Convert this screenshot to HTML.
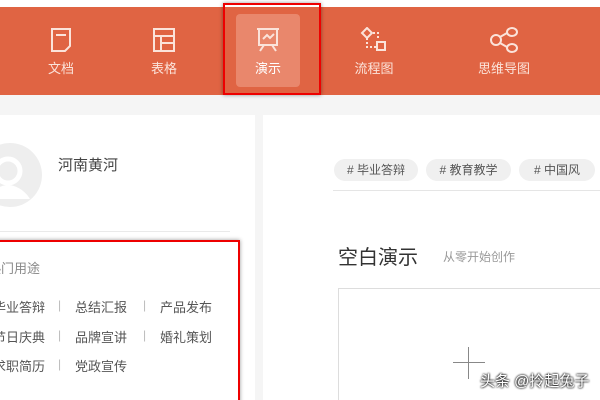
<html><head><style>
html,body{margin:0;width:600px;height:400px;overflow:hidden}
body{background:#f5f5f5;font-family:"Liberation Sans","Noto Sans CJK SC",sans-serif;position:relative}
.a{position:absolute}
.bar{left:0;top:7px;width:600px;height:88px;background:#e06443}
.nav{color:#fbe3da;font-size:13px;text-align:center;width:80px}
.nav svg{display:block;margin:0 auto 5px}
.it{font-size:13px;color:#555;white-space:nowrap}
.sp{font-size:12px;color:#bbb}
.tag{height:22px;border-radius:11px;background:#f0f0f0;color:#555;font-size:12px;line-height:22px;text-align:center}
</style></head><body>
<div class="a" style="left:0;top:0;width:600px;height:7px;background:#fff"></div>
<div class="a bar"></div>
<div class="a" style="left:236px;top:14px;width:64px;height:73px;background:#e9876c;border-radius:4px"></div>
<div class="a nav" style="left:21px;top:27px"><svg width="24" height="26" viewBox="0 0 24 26" fill="none" stroke="#fbe3da" stroke-width="2"><path d="M3 2h18v17l-5 5H3z"/><path d="M7 8h10"/></svg>文档</div>
<div class="a nav" style="left:124px;top:27px"><svg width="24" height="26" viewBox="0 0 24 26" fill="none" stroke="#fbe3da" stroke-width="2"><rect x="2" y="2" width="20" height="22"/><path d="M2 9h20M9 9v15M9 16h13"/></svg>表格</div>
<div class="a nav" style="left:228px;top:27px;color:#fff"><svg width="24" height="26" viewBox="0 0 24 26" fill="none" stroke="#fbe3da" stroke-width="2"><path d="M1 2h22M3 2v16h18V2M7 12l4-4 3 3 4-4M8 18l-4 6M16 18l4 6"/></svg>演示</div>
<div class="a nav" style="left:334px;top:27px"><svg width="30" height="26" viewBox="0 0 30 26" fill="none" stroke="#fbe3da" stroke-width="2"><path d="M8 1l5 5-5 5-5-5z"/><path d="M8 11v9h10M14 6h5v5" stroke-dasharray="2 2"/><rect x="18" y="15" width="8" height="8"/></svg>流程图</div>
<div class="a nav" style="left:464px;top:27px;width:80px"><svg width="30" height="26" viewBox="0 0 30 26" fill="none" stroke="#fbe3da" stroke-width="2"><circle cx="7" cy="13" r="5"/><ellipse cx="23" cy="5" rx="5" ry="4"/><ellipse cx="23" cy="21" rx="5" ry="4"/><path d="M11 10l7-4M11 16l7 4"/></svg>思维导图</div>
<div class="a" style="left:223px;top:3px;width:94px;height:88px;border:2px solid #e00;box-shadow:0 0 4px rgba(0,0,0,.4)"></div>

<div class="a" style="left:0;top:115px;width:255px;height:285px;background:#fff"></div>
<svg class="a" style="left:-22px;top:143px" width="64" height="64" viewBox="0 0 64 64"><circle cx="32" cy="32" r="32" fill="#eee"/><circle cx="30" cy="28" r="12" fill="none" stroke="#fff" stroke-width="5"/><path d="M10 56c4-10 14-14 20-14s16 4 22 14" fill="#fff"/></svg>
<div class="a" style="left:58px;top:154px;font-size:15px;color:#444">河南黄河</div>
<div class="a" style="left:0;top:231px;width:230px;height:1px;background:#eaeaea"></div>
<div class="a" style="left:-12px;top:258px;font-size:13px;color:#888">热门用途</div>
<div class="a it" style="left:-7px;top:297px">毕业答辩</div><div class="a sp" style="left:58px;top:298px">|</div><div class="a it" style="left:75px;top:297px">总结汇报</div><div class="a sp" style="left:143px;top:298px">|</div><div class="a it" style="left:160px;top:297px">产品发布</div>
<div class="a it" style="left:-7px;top:327px">节日庆典</div><div class="a sp" style="left:58px;top:328px">|</div><div class="a it" style="left:75px;top:327px">品牌宣讲</div><div class="a sp" style="left:143px;top:328px">|</div><div class="a it" style="left:160px;top:327px">婚礼策划</div>
<div class="a it" style="left:-7px;top:356px">求职简历</div><div class="a sp" style="left:58px;top:357px">|</div><div class="a it" style="left:75px;top:356px">党政宣传</div>
<div class="a" style="left:-4px;top:240px;width:240px;height:170px;border:2px solid #e00;box-shadow:0 0 4px rgba(0,0,0,.4)"></div>

<div class="a" style="left:263px;top:115px;width:337px;height:285px;background:#fff"></div>
<div class="a tag" style="left:334px;top:159px;width:84px"># 毕业答辩</div>
<div class="a tag" style="left:426px;top:159px;width:85px"># 教育教学</div>
<div class="a tag" style="left:519px;top:159px;width:76px"># 中国风</div>
<div class="a" style="left:333px;top:190px;width:267px;height:1px;background:#e5e5e5"></div>
<div class="a" style="left:338px;top:241px;font-size:20px;color:#333">空白演示</div>
<div class="a" style="left:443px;top:248px;font-size:12px;color:#999">从零开始创作</div>
<div class="a" style="left:338px;top:288px;width:270px;height:120px;border:1px solid #ddd"></div>
<div class="a" style="left:453px;top:362px;width:32px;height:1px;background:#888"></div>
<div class="a" style="left:468px;top:347px;width:1px;height:32px;background:#888"></div>
<div class="a" style="left:480px;top:370px;font-size:15px;color:#fff;text-shadow:0 0 2px #000,0 0 2px #000">头条 @拎起兔子</div>
</body></html>
